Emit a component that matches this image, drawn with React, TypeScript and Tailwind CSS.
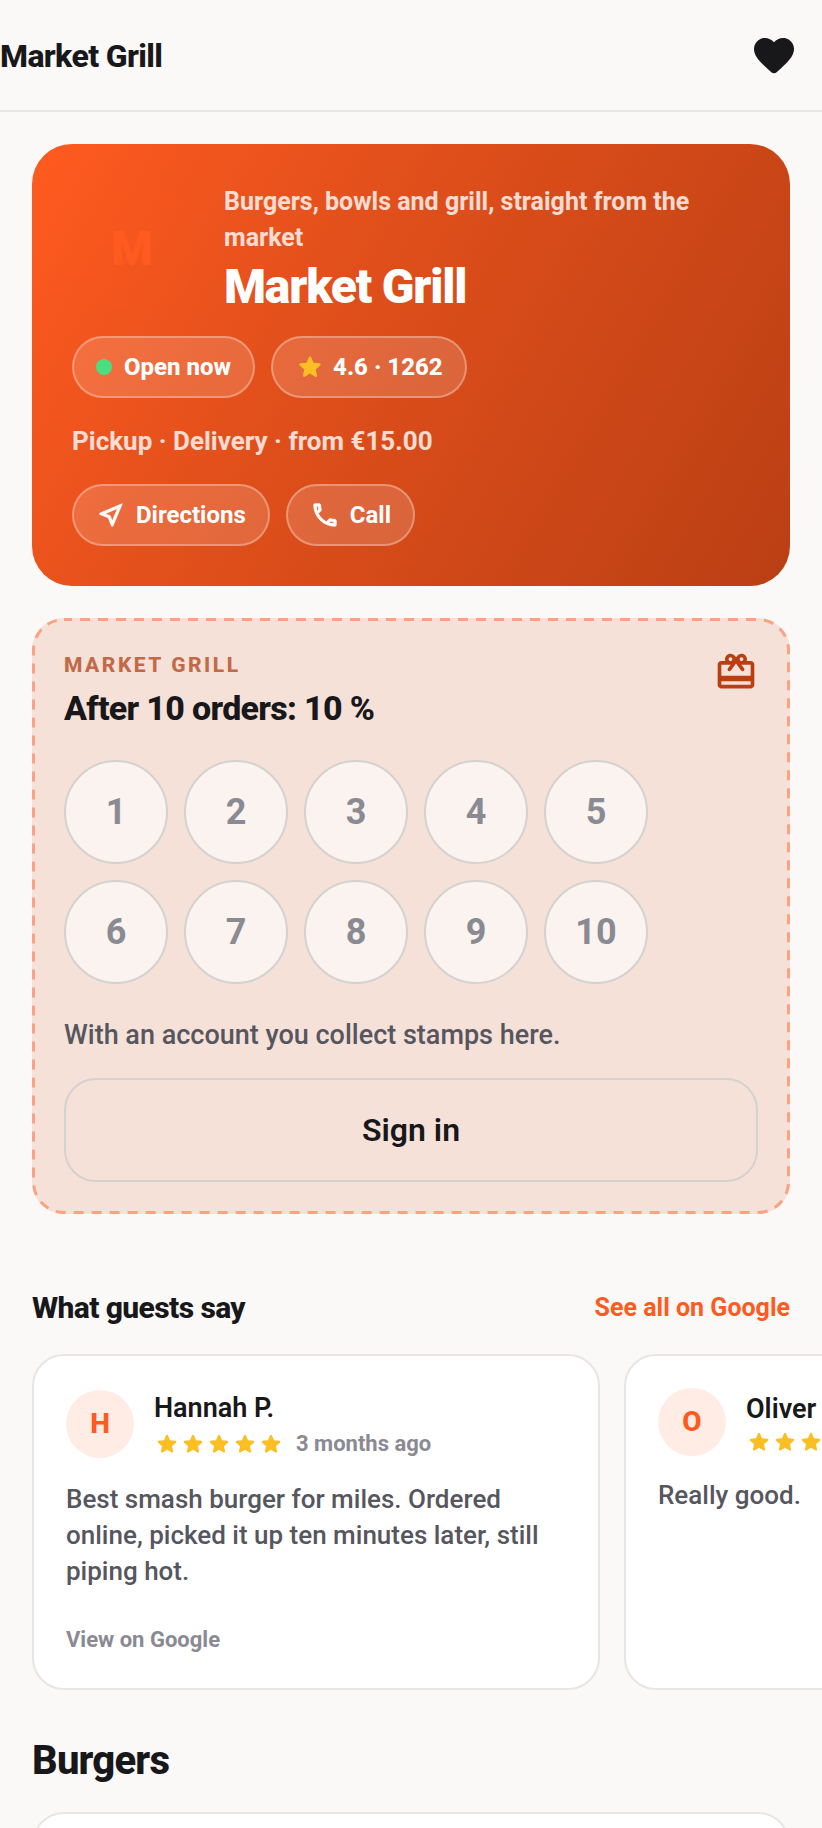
import type { ReactNode } from "react";

function Icon({ d, className }: { d: string; className: string }) {
  return (
    <svg viewBox="0 0 24 24" fill="currentColor" aria-hidden="true" className={className}>
      <path d={d} />
    </svg>
  );
}

const STAR =
  "M12 17.27l4.15 2.51c.76.46 1.69-.22 1.49-1.08l-1.1-4.72 3.67-3.18c.67-.58.31-1.68-.57-1.75l-4.83-.41-1.89-4.46c-.34-.81-1.5-.81-1.84 0L9.19 8.63l-4.83.41c-.88.07-1.24 1.17-.57 1.75l3.67 3.18-1.1 4.72c-.2.86.73 1.54 1.49 1.08l4.15-2.5z";
const HEART =
  "M13.35 20.13c-.76.69-1.93.69-2.69-.01l-.11-.1C5.3 15.27 1.87 12.16 2 8.28c.06-1.7.93-3.33 2.34-4.29 2.64-1.8 5.9-.96 7.66 1.1 1.76-2.06 5.02-2.91 7.66-1.1 1.41.96 2.28 2.59 2.34 4.29.14 3.88-3.3 6.99-8.55 11.76l-.1.09z";
const NEAR_ME =
  "M17.27 6.73l-4.24 10.13-1.32-3.42-.32-.83-.82-.32-3.43-1.33 10.13-4.23M21 3L3 10.53v.98l6.84 2.65L12.48 21h.98L21 3z";
const CALL =
  "M6.54 5c.06.89.21 1.76.45 2.59l-1.2 1.2c-.41-1.2-.67-2.47-.76-3.79h1.51m9.86 12.02c.85.24 1.72.39 2.6.45v1.49c-1.32-.09-2.59-.35-3.8-.75l1.2-1.19M7.5 3H4c-.55 0-1 .45-1 1 0 9.39 7.61 17 17 17 .55 0 1-.45 1-1v-3.49c0-.55-.45-1-1-1-1.24 0-2.45-.2-3.57-.57-.1-.04-.21-.05-.31-.05-.26 0-.51.1-.71.29l-2.2 2.2c-2.83-1.45-5.15-3.76-6.59-6.59l2.2-2.2c.28-.28.36-.67.25-1.02C8.7 6.45 8.5 5.25 8.5 4c0-.55-.45-1-1-1z";
const GIFT =
  "M20 6h-2.18c.11-.31.18-.65.18-1 0-1.66-1.34-3-3-3-1.05 0-1.96.54-2.5 1.35l-.5.67-.5-.68C10.96 2.54 10.05 2 9 2 7.34 2 6 3.34 6 5c0 .35.07.69.18 1H4c-1.11 0-1.99.89-1.99 2L2 19c0 1.11.89 2 2 2h16c1.11 0 2-.89 2-2V8c0-1.11-.89-2-2-2zm-5-2c.55 0 1 .45 1 1s-.45 1-1 1-1-.45-1-1 .45-1 1-1zM9 4c.55 0 1 .45 1 1s-.45 1-1 1-1-.45-1-1 .45-1 1-1zm11 15H4v-2h16v2zm0-5H4V8h5.08L7.6 10.02c-.33.45-.23 1.08.22 1.4.44.32 1.07.22 1.39-.22L12 7.4l2.79 3.8c.32.44.95.54 1.39.22.45-.32.55-.95.22-1.4L14.92 8H20v6z";

const pill =
  "flex items-center rounded-full border-2 border-white/30 bg-white/15 px-[22px] py-[11px] text-2xl leading-9";

function Review({
  name,
  age,
  children,
}: {
  name: string;
  age?: string;
  children: ReactNode;
}) {
  return (
    <article className="flex w-[568px] shrink-0 flex-col rounded-[32px] border-2 border-[#e8e5e2] bg-white p-8">
      <header className="flex items-center gap-5">
        <span className="flex size-[68px] shrink-0 items-center justify-center rounded-full bg-[#ffece5] text-[28px] font-extrabold text-[#ff5a1f]">
          {name[0]}
        </span>
        <div>
          <h3 className="text-[27px] leading-10 font-semibold whitespace-nowrap">{name}</h3>
          <div className="flex items-center gap-3">
            <div role="img" aria-label="5 stars" className="flex text-[#fbbf24]">
              {[1, 2, 3, 4, 5].map((n) => (
                <Icon key={n} d={STAR} className="size-[26px]" />
              ))}
            </div>
            {age && <span className="text-[22px] leading-8 font-bold text-[#8a8a93]">{age}</span>}
          </div>
        </div>
      </header>
      <p className="mt-[21px] mb-[35px] text-[26px] leading-9 font-medium text-[#56565f]">{children}</p>
      {age && (
        <a href="#google" className="mt-auto self-start text-[22px] leading-8 font-bold text-[#8a8a93]">
          View on Google
        </a>
      )}
    </article>
  );
}

export default function App() {
  return (
    <div className="flex h-screen flex-col bg-[#faf9f7] font-['Roboto',sans-serif] text-[#18181b]">
      <header className="flex shrink-0 items-center justify-between border-b-2 border-[#e8e5e2] pt-8 pb-[30px] pr-6">
        <h1 className="text-[32px] leading-10 font-extrabold tracking-[-0.02em]">Market Grill</h1>
        <button type="button" aria-label="Favourite">
          <Icon d={HEART} className="size-12" />
        </button>
      </header>

      <main className="flex-1 overflow-x-hidden overflow-y-auto pt-8 [scrollbar-width:none]">
        <section className="mx-8 rounded-[40px] bg-[linear-gradient(120deg,#ff5a1f,#e04f1b_40%,#ba3f14)] p-10 text-white">
          <div className="flex items-center gap-8">
            <div className="flex size-[120px] shrink-0 items-center justify-center rounded-[36px] bg-[#ff5a1f]/10 text-5xl font-black text-[#ff5a1f]">
              M
            </div>
            <div>
              <p className="text-[25px] leading-9 font-bold text-white/80">
                Burgers, bowls and grill, straight from the market
              </p>
              <h2 className="mt-1 text-5xl leading-[54px] font-black tracking-tight">Market Grill</h2>
            </div>
          </div>
          <div className="mt-[22px] flex flex-wrap gap-4">
            <span className={`${pill} gap-3 font-extrabold`}>
              <span className="size-4 rounded-full bg-[#4ade80]" />
              Open now
            </span>
            <span className={`${pill} gap-2 font-extrabold`}>
              <Icon d={STAR} className="size-[30px] text-[#fbbf24]" />
              4.6 · 1262
            </span>
          </div>
          <p className="mt-6 text-[26px] leading-[38px] font-bold text-white/80">
            Pickup · Delivery · from €15.00
          </p>
          <div className="mt-6 flex flex-wrap gap-4">
            <a href="#directions" className={`${pill} gap-2.5 font-bold`}>
              <Icon d={NEAR_ME} className="size-[30px] stroke-current stroke-[0.6]" />
              Directions
            </a>
            <a href="#call" className={`${pill} gap-2.5 font-bold`}>
              <Icon d={CALL} className="size-[30px] stroke-current stroke-[0.6]" />
              Call
            </a>
          </div>
        </section>

        <section className="relative mx-8 mt-8 rounded-[32px] bg-[#f5e1d8] p-8">
          <svg aria-hidden="true" className="pointer-events-none absolute inset-0 size-full">
            <rect
              x="1.5"
              y="1.5"
              rx="30.5"
              fill="none"
              stroke="#faa283"
              strokeWidth="3"
              strokeDasharray="10 8"
              strokeDashoffset="2"
              className="h-[calc(100%-3px)] w-[calc(100%-3px)]"
            />
          </svg>
          <div className="flex items-start justify-between">
            <div>
              <p className="text-[21px] leading-[30px] font-extrabold tracking-[0.12em] text-[#c26a48] uppercase">
                Market Grill
              </p>
              <h2 className="mt-2 text-[34px] leading-10 font-extrabold tracking-[-0.02em]">After 10 orders: 10 %</h2>
            </div>
            <Icon d={GIFT} className="size-11 text-[#b93f13]" />
          </div>
          <ol className="mt-8 grid w-fit grid-cols-5 gap-4">
            {[1, 2, 3, 4, 5, 6, 7, 8, 9, 10].map((n) => (
              <li
                key={n}
                className="flex size-[104px] items-center justify-center rounded-full border-2 border-[#d4d2cd] bg-[#fbf3f0] text-4xl font-bold text-[#8a8a93]"
              >
                {n}
              </li>
            ))}
          </ol>
          <p className="mt-8 text-[27px] leading-[38px] font-medium text-[#56565f]">
            With an account you collect stamps here.
          </p>
          <button
            type="button"
            className="mt-6 h-[104px] w-full rounded-[32px] border-2 border-[#d4d2cd] text-[32px] font-semibold"
          >
            Sign in
          </button>
        </section>

        <div className="mx-8 mt-[72px] flex items-center justify-between">
          <h2 className="text-3xl leading-11 font-extrabold tracking-[-0.02em]">What guests say</h2>
          <a href="#reviews" className="text-[25px] font-bold text-[#ff5a1f]">
            See all on Google
          </a>
        </div>
        <div className="mt-6 flex gap-6 overflow-x-auto px-8 [scrollbar-width:none]">
          <Review name="Hannah P." age="3 months ago">
            Best smash burger for miles. Ordered online, picked it up ten minutes later, still piping hot.
          </Review>
          <Review name="Oliver">Really good.</Review>
        </div>

        <h2 className="mx-8 mt-11 text-[40px] leading-[54px] font-extrabold tracking-[-0.02em]">Burgers</h2>
        <div className="mx-8 mt-6 h-60 rounded-[32px] border-2 border-[#e8e5e2] bg-white" />
      </main>
    </div>
  );
}
